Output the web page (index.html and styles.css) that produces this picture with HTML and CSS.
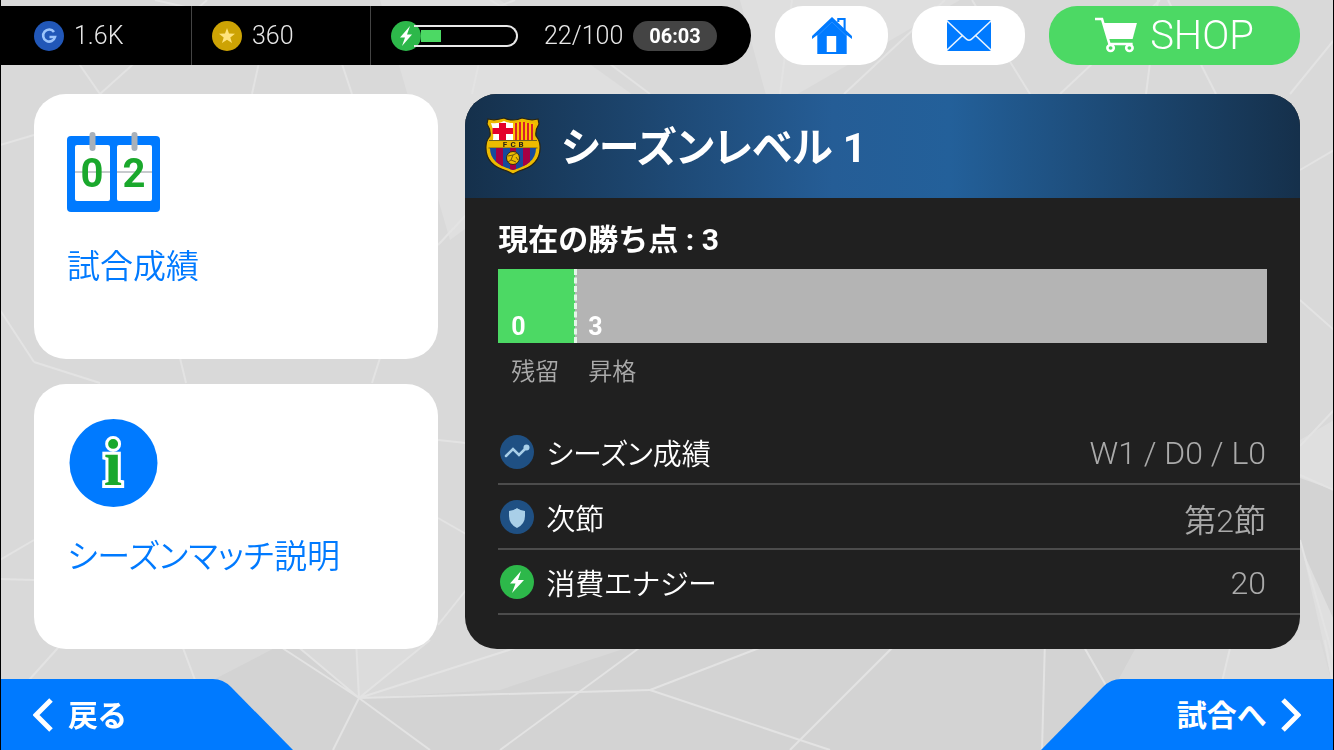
FILE: index.html
```html
<!DOCTYPE html>
<html lang="ja">
<head>
    <meta charset="UTF-8">
    <meta name="viewport" content="width=device-width, initial-scale=1.0">
    <title>シーズンマッチ</title>
    <link rel="stylesheet" href="styles.css">
</head>
<body>
    <svg class="backdrop" viewBox="0 0 1334 750" preserveAspectRatio="xMidYMid slice" aria-hidden="true">
        <path fill="#dfdfdf" d="M0 0H500L640 100L450 240L380 0ZM740 0H960L770 110ZM1300 440L1334 420V690L1300 540Z"/>
        <path fill="#d3d3d3" d="M290 640L359 698L500 690L650 640L1140 640L1080 750H333L290 750L215 679ZM1300 478L1334 490V620L1300 545Z"/>
        <path fill="#dcdcdc" d="M359 698L356 640H430ZM1232 640L1220 690H1334L1320 640Z"/>
        <g class="facets">
            <path d="M75 58L100 94L140 58M260 58L252 94M340 58L352 94M155 0L190 8M207 0L198 8M480 58L472 94M602 58L650 94M490 0L500 6L515 0"/>
            <path d="M792 0L780 94M945 0L844 94M972 0L1030 94M1160 0L1060 94M1158 0L1146 94M1168 0L1216 94M1334 40L1290 94"/>
            <path d="M0 145L34 135M0 310L34 362M34 362L100 383M180 358L186 383M380 358L372 383M438 245L466 215M438 440L466 443M438 518L466 534M438 625L466 590M0 560L34 540M0 579L34 580"/>
            <path d="M65 640L20 690M180 640L195 680M270 640L359 698L290 640M359 698L356 640M359 698L430 640M359 698L540 640M359 698L650 690M359 698L333 750M359 698L430 750"/>
            <path d="M650 640L500 750M650 690L780 640M650 690L830 750M900 640L790 750M1045 640L1042 750M1080 640L1120 710M1232 640L1220 690M1325 640L1334 690"/>
            <path d="M1300 446L1334 410M1300 475L1334 490M1300 540L1334 660M1300 170L1334 150M1300 300L1334 330"/>
        </g>
    </svg>

    <div class="screen">
        <header class="topbar">
            <ul class="wallet">
                <li class="wallet-item">
                    <svg class="coin" viewBox="0 0 30 30" aria-hidden="true">
                        <circle cx="15" cy="15" r="15" fill="#2157b8"/>
                        <path d="M20 11A6 6 0 1 0 21 16H15.500" fill="none" stroke="#9cc4fb" stroke-width="2.600"/>
                    </svg>
                    <span>1.6K</span>
                </li>
                <li class="wallet-item">
                    <svg class="coin" viewBox="0 0 30 30" aria-hidden="true">
                        <circle cx="15" cy="15" r="15" fill="#cda304"/>
                        <path d="M15 7L17 12.500L23 12.700L18.300 16.400L20 22L15 18.700L10 22L11.700 16.400L7 12.700L13 12.500Z" fill="#ffe37c"/>
                    </svg>
                    <span>360</span>
                </li>
                <li class="wallet-item energy">
                    <div class="energy-gauge">
                        <svg class="coin" viewBox="0 0 30 30" aria-hidden="true">
                            <circle cx="15" cy="15" r="15" fill="#2db84a"/>
                            <path d="M19 5L9 16.500H14L11 25L21 13.500H16Z" fill="#fff"/>
                        </svg>
                        <div class="tube"><div class="tube-fill" style="width: 22%"></div></div>
                    </div>
                    <span>22/100</span>
                    <time class="timer">06:03</time>
                </li>
            </ul>

            <nav class="shortcuts">
                <a class="pill" href="#home" aria-label="ホーム">
                    <svg width="42" height="40" viewBox="0 0 40 40" preserveAspectRatio="none" aria-hidden="true">
                        <path d="M20 1L39 20V23L34 19V38H6V19L1 23V20Z" fill="#007aff"/>
                        <path d="M26 6V3H32V14" fill="none" stroke="#007aff" stroke-width="2"/>
                        <path d="M6 20L20 6L34 20" fill="none" stroke="#4da2ff" stroke-width="0.500"/>
                        <path d="M15 20H24V36H15Z" fill="#fff"/>
                    </svg>
                </a>
                <a class="pill" href="#mail" aria-label="メール">
                    <svg width="44" height="31" viewBox="0 0 40 31" preserveAspectRatio="none" aria-hidden="true">
                        <rect width="40" height="31" rx="1.500" fill="#007aff"/>
                        <path d="M0 1L17 18.500Q20 22 23 18.500L40 1M0 30L14 15.500M40 30L26 15.500" fill="none" stroke="#e8f3ff" stroke-width="1.500"/>
                    </svg>
                </a>
                <a class="pill shop" href="#shop">
                    <svg width="43" height="38" viewBox="0 0 40 38" preserveAspectRatio="none" aria-hidden="true">
                        <path d="M8 6H39L35 22H12.500Z" fill="#fff"/>
                        <path d="M0 2H6.500L13.500 27H35" fill="none" stroke="#fff" stroke-width="2.400"/>
                        <circle cx="14.500" cy="31" r="3" fill="#4cd964" stroke="#fff" stroke-width="2.400"/>
                        <circle cx="32" cy="31" r="3" fill="#4cd964" stroke="#fff" stroke-width="2.400"/>
                    </svg>
                    <span>SHOP</span>
                </a>
            </nav>
        </header>

        <main class="content">
            <a class="card" href="#results">
                <svg class="card-icon" viewBox="0 0 93 90" aria-hidden="true">
                    <rect y="8" width="93" height="76" rx="4" fill="#007aff"/>
                    <rect x="8" y="17" width="35" height="56" rx="2" fill="#fff"/>
                    <rect x="50" y="17" width="35" height="56" rx="2" fill="#fff"/>
                    <path d="M8 44H43M50 44H85" stroke="#b5b9bd" stroke-width="1.500"/>
                    <text class="flip-digit" x="25" y="59">0</text>
                    <text class="flip-digit" x="67" y="59">2</text>
                    <path d="M25.500 7V20M67.500 7V20" stroke="#a9b1ba" stroke-width="6" stroke-linecap="round"/>
                </svg>
                <span>試合成績</span>
            </a>
            <a class="card" href="#about">
                <svg class="card-icon" viewBox="0 0 93 90" aria-hidden="true">
                    <circle cx="46.500" cy="45" r="44" fill="#007aff"/>
                    <text class="info-mark" x="46" y="67">i</text>
                </svg>
                <span>シーズンマッチ説明</span>
            </a>

            <section class="panel">
                <div class="panel-head">
                    <svg class="crest" viewBox="0 0 56 58" aria-hidden="true">
                        <defs>
                            <clipPath id="lower"><path d="M5 31H51C51 43 42 49 28 53C14 49 5 43 5 31Z"/></clipPath>
                        </defs>
                        <path d="M3 2Q10 4 19 1Q23 3 28 3Q33 3 37 1Q46 4 53 2L54 7Q50 13 51 19Q55 24 55 29C56 44 45 51 34 54L28 57L22 54C11 51 0 44 1 29Q1 24 5 19Q6 13 2 7Z" fill="#edbb00" stroke="#282414" stroke-width="1.200"/>
                        <path d="M6 6Q14 7 19 4Q23 6 28 6V23H8Q9 13 6 6Z" fill="#fff"/>
                        <path d="M14 6H21V23H14ZM7.500 11H28V17H7.500Z" fill="#e4002b"/>
                        <path d="M28 6Q34 6 37 4Q43 7 50 6Q47 13 48 23H28Z" fill="#fcc200"/>
                        <path d="M31 6V23M35 5V23M39 5V23M43 6V23M47 7V23" stroke="#d5202e" stroke-width="2"/>
                        <path d="M4 23.500H52M3.500 31H52.500" stroke="#70601a"/>
                        <text class="crest-text" x="20" y="30">F</text>
                        <text class="crest-text" x="28" y="30">C</text>
                        <text class="crest-text" x="36" y="30">B</text>
                        <g clip-path="url(#lower)">
                            <path d="M4 31H52V54H4Z" fill="#174a9c"/>
                            <path d="M11 31H18V54H11ZM25 31H31V54H25ZM38 31H45V54H38Z" fill="#a50044"/>
                        </g>
                        <circle cx="28" cy="41" r="6.500" fill="#edbb00" stroke="#302b16"/>
                        <path d="M23 39L28 38L32 36M28 38L26 43L23 45M26 43L31 45M31 40L33 43" fill="none" stroke="#6c5612"/>
                    </svg>
                    <h1>シーズンレベル 1</h1>
                </div>

                <div class="points">
                    <h2>現在の勝ち点 : 3</h2>
                    <div class="points-bar">
                        <span class="reached">0</span>
                        <span class="goal">3</span>
                    </div>
                    <div class="points-legend">
                        <span>残留</span>
                        <span>昇格</span>
                    </div>
                </div>

                <table class="stats">
                    <tr>
                        <th scope="row">
                            <svg class="stat-icon" viewBox="0 0 34 34" aria-hidden="true">
                                <circle cx="17" cy="17" r="17" fill="#1f5083"/>
                                <path d="M6 21L13 14L19 20L26 13" fill="none" stroke="#a9cfe8" stroke-width="2.500" stroke-linecap="round"/>
                                <circle cx="26.500" cy="12.500" r="3" fill="#a9cfe8"/>
                            </svg>
                            シーズン成績
                        </th>
                        <td>W1 / D0 / L0</td>
                    </tr>
                    <tr>
                        <th scope="row">
                            <svg class="stat-icon" viewBox="0 0 34 34" aria-hidden="true">
                                <circle cx="17" cy="17" r="17" fill="#1f5083"/>
                                <path d="M17 8Q21 11 25 11V16Q25 24 17 28Q9 24 9 16V11Q13 11 17 8Z" fill="#a9cfe8"/>
                            </svg>
                            次節
                        </th>
                        <td>第2節</td>
                    </tr>
                    <tr>
                        <th scope="row">
                            <svg class="stat-icon" viewBox="0 0 34 34" aria-hidden="true">
                                <circle cx="17" cy="17" r="17" fill="#2db84a"/>
                                <path d="M21 6L10 18.500H15.500L12 28L24 15H18Z" fill="#fff"/>
                            </svg>
                            消費エナジー
                        </th>
                        <td>20</td>
                    </tr>
                </table>
            </section>
        </main>

        <footer class="bottombar">
            <a class="step back" href="#back">
                <svg width="20" height="34" viewBox="0 0 20 34" aria-hidden="true"><path d="M18 2L3 17L18 32" fill="none" stroke="#fff" stroke-width="5"/></svg>
                <span>戻る</span>
            </a>
            <a class="step next" href="#match">
                <span>試合へ</span>
                <svg width="20" height="34" viewBox="0 0 20 34" aria-hidden="true"><path d="M2 2L17 17L2 32" fill="none" stroke="#fff" stroke-width="5"/></svg>
            </a>
        </footer>
    </div>
</body>
</html>
```

FILE: styles.css
```css
* {
    box-sizing: border-box;
}
body {
    margin: 0;
    background: #d9d9d9;
    font-family: Roboto, "Noto Sans CJK JP", sans-serif;
    font-weight: 350;
    font-feature-settings: "palt";
}
a {
    color: inherit;
    text-decoration: none;
}
svg {
    display: block;
    flex: none;
}
.backdrop {
    position: fixed;
    width: 100%;
    height: 100%;
}
.facets {
    fill: none;
    stroke: #e3e3e3;
    stroke-width: 2;
}
.screen {
    position: relative;
    display: flex;
    flex-direction: column;
    min-height: 100vh;
    padding-top: 6px;
    border: solid #000;
    border-width: 0 1px;
}

/* top bar */
.topbar {
    display: flex;
    gap: 24px;
    padding-right: 33px;
    color: #fff;
}
.wallet {
    display: flex;
    flex: 1;
    margin: 0;
    padding: 0;
    list-style: none;
    background: #000;
    border-radius: 0 30px 30px 0;
    font-size: 25px;
    color: #e8e8e8;
}
.wallet-item {
    display: flex;
    align-items: center;
    gap: 10px;
    width: 190px;
    height: 59px;
    padding-left: 33px;
}
.wallet-item + .wallet-item {
    width: 179px;
    padding-left: 20px;
    border-left: 1px solid #444;
}
.wallet-item.energy {
    flex: 1;
}
.coin {
    width: 30px;
    height: 30px;
}
.energy-gauge {
    display: flex;
    align-items: center;
    margin-right: 16px;
}
.tube {
    width: 104px;
    height: 22px;
    margin-left: -7px;
    padding: 3px 3px 3px 7px;
    border: 2px solid #e8e8e8;
    border-left: 0;
    border-radius: 0 11px 11px 0;
}
.tube-fill {
    height: 12px;
    background: #4cd964;
}
.timer {
    padding: 0 16px;
    background: #444;
    border-radius: 15px;
    color: #fff;
    font-size: 20px;
    font-weight: 700;
    line-height: 30px;
}
.shortcuts {
    display: flex;
    gap: 24px;
}
.pill {
    display: flex;
    align-items: center;
    justify-content: center;
    width: 113px;
    height: 59px;
    background: #fff;
    border-radius: 28px;
}
.pill.shop {
    gap: 12px;
    width: 251px;
    background: #4cd964;
    font-size: 40px;
}

/* cards and season panel */
.content {
    flex: 1;
    display: grid;
    grid-template-columns: 404fr 834fr;
    grid-template-rows: 1fr 1fr;
    gap: 25px 27px;
    padding: 29px 33px 30px;
}
.card {
    padding: 34px 33px;
    background: #fff;
    border-radius: 32px;
    color: #007aff;
    font-size: 33px;
    line-height: 50px;
}
.card-icon {
    width: 93px;
    height: 90px;
    margin-bottom: 24px;
}
.flip-digit {
    fill: #1aa82c;
    font-size: 40px;
    font-weight: 700;
    text-anchor: middle;
}
.info-mark {
    fill: #1aa82c;
    stroke: #fff;
    stroke-width: 6px;
    paint-order: stroke;
    font-family: "Liberation Serif", serif;
    font-size: 66px;
    font-weight: 700;
    text-anchor: middle;
}
.panel {
    grid-area: 1 / 2 / 3 / 3;
    overflow: hidden;
    background: #202020;
    border-radius: 32px;
    color: #fff;
}
.panel-head {
    display: flex;
    align-items: center;
    gap: 20px;
    height: 104px;
    padding-left: 20px;
    background: linear-gradient(90deg, #15304b, #255d96 44%, #23609a 58%, #15304b);
}
.crest {
    width: 56px;
    height: 58px;
}
.crest-text {
    fill: #282414;
    font-size: 8px;
    font-weight: 700;
    text-anchor: middle;
}
.panel h1 {
    margin: 0;
    padding-top: 4px;
    font-size: 41px;
    font-weight: 700;
    line-height: 60px;
}
.points {
    padding: 21px 33px 29px;
}
.points h2 {
    margin: 0 0 8px;
    font-size: 30px;
    font-weight: 700;
    font-feature-settings: normal;
    line-height: 42px;
}
.points-bar,
.points-legend {
    display: grid;
    grid-template-columns: 10% 1fr;
}
.points-bar {
    background: #b4b4b4;
    font-size: 25px;
    font-weight: 700;
    line-height: 32px;
}
.points-bar span {
    padding: 42px 0 0 13px;
}
.points-bar .reached {
    background: #4cd964;
}
.points-bar .goal {
    padding-left: 11px;
    margin-left: -1px;
    border-left: 3px dashed #e4f7e8;
}
.points-legend {
    padding-top: 10px;
    color: #aaa;
    font-size: 24px;
    line-height: 38px;
}
.points-legend span {
    padding-left: 13px;
}
.stats {
    width: calc(100% - 33px);
    margin-left: 33px;
    border-collapse: collapse;
}
.stats tr {
    border-bottom: 2px solid #4c4c4c;
}
.stats th {
    display: flex;
    align-items: center;
    gap: 12px;
    height: 63px;
    padding: 0 0 0 2px;
    font-size: 29px;
    font-weight: 350;
}
.stats td {
    padding: 2px 34px 0 0;
    color: #aaa;
    font-size: 32px;
    text-align: right;
}
.stat-icon {
    width: 34px;
    height: 34px;
}

/* bottom bar */
.bottombar {
    display: flex;
    justify-content: space-between;
    color: #fff;
    font-size: 30px;
    font-weight: 700;
}
.step {
    display: flex;
    align-items: center;
    gap: 15px;
    width: 292px;
    height: 71px;
    padding: 0 32px;
    background: #007aff;
}
.step span {
    padding-bottom: 4px;
}
.back {
    clip-path: path("M0 0H212Q222 0 230 8L292 71H0Z");
}
.next {
    justify-content: flex-end;
    clip-path: path("M292 0H80Q70 0 62 8L0 71H292Z");
}
```
